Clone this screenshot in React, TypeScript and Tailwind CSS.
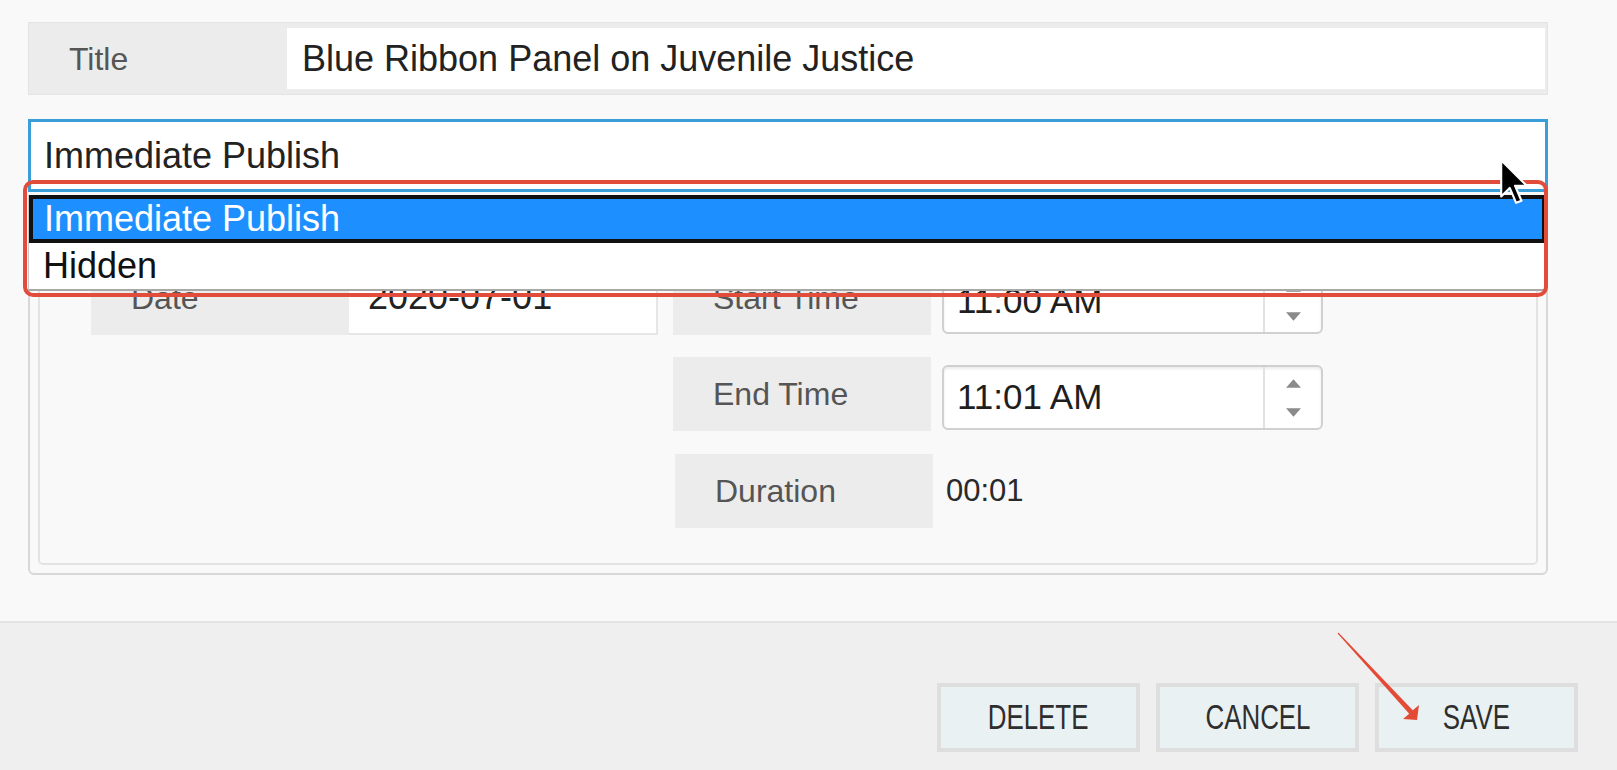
import React from "react";

const Label = ({ text, className = "" }: { text: string; className?: string }) => (
  <div
    className={`flex h-[74px] w-[258px] shrink-0 items-center bg-[#ececec] pl-[40px] text-[32px] text-[#555] ${className}`}
  >
    {text}
  </div>
);

const TimeInput = ({ value }: { value: string }) => (
  <div className="ml-[11px] mt-[8px] flex h-[65px] w-[381px] rounded-[6px] border-2 border-[#d0d0d0] bg-white shadow-[inset_0_2px_3px_rgba(0,0,0,0.08)]">
    <div className="flex flex-1 items-center pl-[13px] text-[35px] text-[#1e1e1e]">{value}</div>
    <div className="flex w-[58px] flex-col items-center justify-center gap-[20px] border-l-2 border-[#e2e2e2]">
      <svg width="15" height="9" viewBox="0 0 14 8">
        <path d="M7 0 L14 8 L0 8 Z" fill="#8a8a8a" />
      </svg>
      <svg width="15" height="9" viewBox="0 0 14 8">
        <path d="M0 0 L14 0 L7 8 Z" fill="#8a8a8a" />
      </svg>
    </div>
  </div>
);

const Button = ({ text }: { text: string }) => (
  <button className="flex h-[69px] w-[203px] items-center justify-center border-4 border-[#dedede] bg-[#eaf1f3] text-[35px] text-[#2e2e2e]">
    <span className="inline-block scale-x-[0.74]">{text}</span>
  </button>
);

export default function App() {
  return (
    <div className="relative h-[770px] w-full overflow-hidden bg-[#f9f9f9] font-['Liberation_Sans',Arial,sans-serif]">
      <div className="h-[621px] pl-[28px] pr-[69px] pt-[22px]">
        {/* title */}
        <div className="flex h-[73px] border border-[#e4e4e4] bg-[#ececec]">
          <div className="flex w-[258px] items-center pl-[40px] text-[32px] text-[#555]">Title</div>
          <div className="my-[5px] mr-[2px] flex flex-1 items-center bg-white pl-[15px] text-[36px] text-[#222]">
            Blue Ribbon Panel on Juvenile Justice
          </div>
        </div>

        {/* publish select */}
        <div className="mt-[24px] flex h-[73px] items-center border-[3px] border-[#3a9fd8] bg-white pl-[13px] text-[36px] text-[#222]">
          Immediate Publish
        </div>

        {/* schedule panel */}
        <div className="mt-[16px] rounded-[6px] border-2 border-[#d8d8d8] p-[8px]">
          <div className="flex rounded-[5px] border-2 border-[#e3e3e3] pb-[35px] pl-[51px] pt-[41px]">
            <div className="flex h-[74px]">
              <Label text="Date" />
              <div className="flex h-[74px] w-[309px] items-center border-b-2 border-r-2 border-[#e6e6e6] bg-white pl-[19px] text-[36px] text-[#222]">
                2020-07-01
              </div>
            </div>
            <div className="ml-[15px] flex flex-col gap-[22px]">
              <div className="flex h-[74px]">
                <Label text="Start Time" className="w-[257px]" />
                <TimeInput value="11:00 AM" />
              </div>
              <div className="flex h-[74px]">
                <Label text="End Time" className="w-[257px]" />
                <TimeInput value="11:01 AM" />
              </div>
              <div className="mt-[1px] flex h-[74px]">
                <Label text="Duration" className="ml-[2px]" />
                <div className="ml-[13px] flex items-center text-[31px] text-[#2a2a2a]">00:01</div>
              </div>
            </div>
          </div>
        </div>
      </div>

      {/* footer */}
      <div className="flex h-[149px] justify-end gap-[16px] border-t-2 border-[#e3e3e3] bg-[#efefef] pr-[39px] pt-[60px]">
        <Button text="DELETE" />
        <Button text="CANCEL" />
        <Button text="SAVE" />
      </div>

      {/* open dropdown list */}
      <div className="absolute left-[28px] top-[195px] w-[1519px] border-x border-b-2 border-x-[#c8c8c8] border-b-[#a8a8a8] bg-white text-[36px]">
        <div className="flex h-[48px] items-center border-[4px] border-[#111] bg-[#1e8fff] pl-[11px] text-white">
          Immediate Publish
        </div>
        <div className="flex h-[46px] items-center pl-[14px] text-[#111]">Hidden</div>
      </div>

      {/* annotation box */}
      <div className="absolute left-[23px] top-[180px] h-[117px] w-[1525px] rounded-[10px] border-[4px] border-[#e24c3b]" />

      {/* mouse cursor */}
      <svg className="absolute left-[1499px] top-[158px]" width="30" height="47" viewBox="0 0 14 22">
        <path d="M1 1 L1 18 L5 14 L8 21 L10.5 20 L7.5 13 L13 13 Z" fill="#000" stroke="#fff" strokeWidth="1" strokeLinejoin="round" />
      </svg>

      {/* annotation arrow */}
      <svg className="absolute left-[1330px] top-[625px]" width="100" height="105" viewBox="0 0 100 105">
        <polygon points="7.6,8.4 8.4,7.6 82.8,85.3 89,80 87,95 73,94 79.2,88.7" fill="#e34b37" />
      </svg>
    </div>
  );
}
